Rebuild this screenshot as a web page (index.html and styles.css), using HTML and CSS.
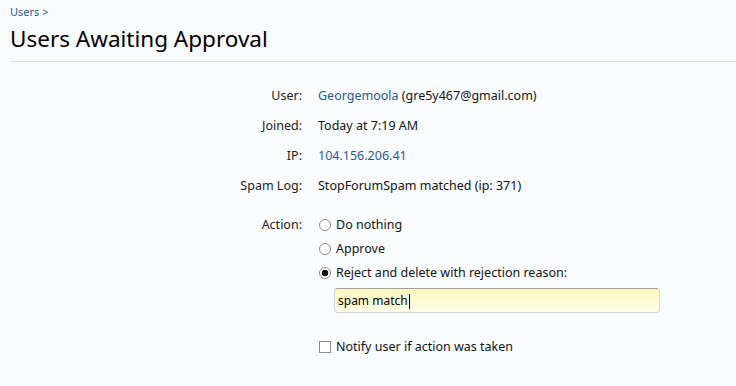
FILE: index.html
```html
<!DOCTYPE html>
<html>
<head>
<meta charset="utf-8">
<link rel="stylesheet" href="styles.css">
</head>
<body>
<div class="crumbs"><a href="#">Users</a> &gt;</div>
<h1 class="title">Users Awaiting Approval</h1>
<div class="form">
  <div class="row">
    <div class="label">User:</div>
    <div class="value"><a href="#">Georgemoola</a> (gre5y467@gmail.com)</div>
  </div>
  <div class="row">
    <div class="label">Joined:</div>
    <div class="value">Today at 7:19 AM</div>
  </div>
  <div class="row">
    <div class="label">IP:</div>
    <div class="value"><a href="#">104.156.206.41</a></div>
  </div>
  <div class="row">
    <div class="label">Spam Log:</div>
    <div class="value">StopForumSpam matched (ip: 371)</div>
  </div>
  <div class="row action">
    <div class="label">Action:</div>
    <div class="value">
      <label class="opt"><input type="radio" name="a"> Do nothing</label>
      <label class="opt"><input type="radio" name="a"> Approve</label>
      <label class="opt"><input type="radio" name="a" checked> Reject and delete with rejection reason:</label>
      <div class="reason"><div class="text">spam match<span class="caret"></span></div></div>
      <label class="opt notify"><input type="checkbox"> Notify user if action was taken</label>
    </div>
  </div>
</div>
</body>
</html>
```
FILE: styles.css
```css
html, body {
  margin: 0;
  padding: 0;
  background: #fafbfd;
}
body {
  font-family: "Noto Sans", "DejaVu Sans", sans-serif;
  font-size: 12.5px;
  color: #141414;
}
a {
  color: #2b5a8c;
  text-decoration: none;
}
.crumbs {
  padding: 5px 10px 0;
  font-size: 11px;
  line-height: 14px;
  color: #2b5a8c;
}
.title {
  margin: 6px 0 0 10px;
  padding: 0 0 8px;
  font-size: 22.5px;
  line-height: 28px;
  font-weight: normal;
  color: #000;
  border-bottom: 1px solid #d5e3f0;
}
.form {
  padding-top: 19px;
}
.row {
  display: grid;
  grid-template-columns: 292px 1fr;
  column-gap: 16px;
  margin-left: 10px;
  line-height: 18px;
  padding: 6px 0;
}
.label {
  text-align: right;
  color: #222;
}
.action {
  margin-top: 9px;
}
.value {
  display: block;
}
.opt {
  display: flex;
  align-items: center;
  line-height: 18px;
  margin-bottom: 6px;
}
.opt input {
  appearance: none;
  -webkit-appearance: none;
  box-sizing: border-box;
  margin: 0 5px 0 1px;
  width: 12px;
  height: 12px;
  border: 1px solid #8c8c8c;
  background: #fff;
  flex: none;
}
.opt input[type="radio"] {
  border-radius: 50%;
}
.opt input[type="radio"]:checked {
  background: radial-gradient(circle, #111 0 3px, #fff 3.6px);
}
.reason {
  padding-left: 16px;
}
.text {
  box-sizing: border-box;
  display: flex;
  align-items: center;
  width: 326px;
  height: 25px;
  padding: 1px 3px 0;
  font-size: 12px;
  color: #000;
  border: 1px solid #d6d6d6;
  border-top-color: #a0a0a0;
  border-radius: 4px;
  background: linear-gradient(#fff7bd, #fffde9);
}
.caret {
  display: inline-block;
  width: 1px;
  height: 15px;
  background: #000;
  margin-left: 1px;
}
.notify {
  margin-top: 25px;
}
```
